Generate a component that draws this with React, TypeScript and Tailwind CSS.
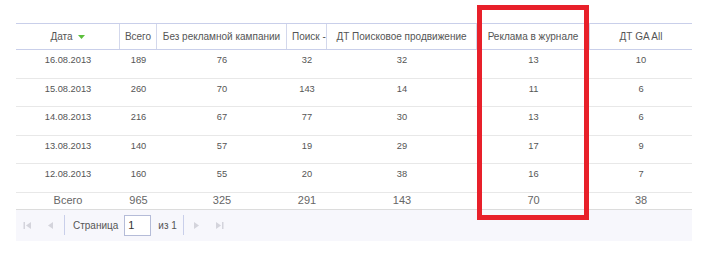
const cols = 'grid grid-cols-[104px_37px_130px_40px_150px_113px_102px]';

const rows = [
  ['16.08.2013', '189', '76', '32', '32', '13', '10'],
  ['15.08.2013', '260', '70', '143', '14', '11', '6'],
  ['14.08.2013', '216', '67', '77', '30', '13', '6'],
  ['13.08.2013', '140', '57', '19', '29', '17', '9'],
  ['12.08.2013', '160', '55', '20', '38', '16', '7'],
];

const totals = ['Всего', '965', '325', '291', '143', '70', '38'];

function FirstIcon() {
  return (
    <svg width="9" height="9" viewBox="0 0 9 9">
      <rect x="0.5" y="1" width="1.5" height="7" fill="#d4d4dc" />
      <path d="M8 1 L3 4.5 L8 8 Z" fill="#d4d4dc" />
    </svg>
  );
}

function PrevIcon() {
  return (
    <svg width="7" height="9" viewBox="0 0 7 9">
      <path d="M6 1 L1 4.5 L6 8 Z" fill="#d4d4dc" />
    </svg>
  );
}

function NextIcon() {
  return (
    <svg width="7" height="9" viewBox="0 0 7 9">
      <path d="M1 1 L6 4.5 L1 8 Z" fill="#d4d4dc" />
    </svg>
  );
}

function LastIcon() {
  return (
    <svg width="9" height="9" viewBox="0 0 9 9">
      <path d="M1 1 L6 4.5 L1 8 Z" fill="#d4d4dc" />
      <rect x="7" y="1" width="1.5" height="7" fill="#d4d4dc" />
    </svg>
  );
}

function HeaderCell({ children, last, left }: { children: React.ReactNode; last?: boolean; left?: boolean }) {
  return (
    <div
      className={`flex items-center overflow-hidden whitespace-nowrap px-[5px] ${
        left ? 'justify-start' : 'justify-center'
      } ${last ? '' : 'border-r border-[#d3d8ec]'}`}
    >
      {children}
    </div>
  );
}

export default function App() {
  return (
    <div className="relative w-[703px] h-[255px] bg-white pt-[23px] pl-[16px] font-['Liberation_Sans',Arial,sans-serif] text-[#666]">
      <div className="w-[676px]">
        {/* header */}
        <div className={`${cols} h-[27px] border-t border-b border-[#c9cfea] text-[10px] text-[#555]`}>
          <HeaderCell>
            Дата
            <svg className="ml-[5px]" width="7" height="4" viewBox="0 0 7 4">
              <path d="M0 0 L7 0 L3.5 4 Z" fill="#5cbf3c" />
            </svg>
          </HeaderCell>
          <HeaderCell>Всего</HeaderCell>
          <HeaderCell>Без рекламной кампании</HeaderCell>
          <HeaderCell left>Поиск -</HeaderCell>
          <HeaderCell>ДТ Поисковое продвижение</HeaderCell>
          <HeaderCell>Реклама в журнале</HeaderCell>
          <HeaderCell last>ДТ GA All</HeaderCell>
        </div>

        {/* data rows */}
        {rows.map((r) => (
          <div key={r[0]} className={`${cols} h-[28.6px] border-b-[1.5px] border-[#e8e8e8] text-[9.3px] leading-[11px] text-[#555]`}>
            {r.map((v, i) => (
              <div key={i} className="text-center pt-[5px]">
                {v}
              </div>
            ))}
          </div>
        ))}

        {/* totals */}
        <div className={`${cols} h-[17px] border-b border-[#dcdcdc] text-[11px] leading-[15px]`}>
          {totals.map((v, i) => (
            <div key={i} className="text-center">
              {v}
            </div>
          ))}
        </div>

        {/* pager */}
        <div className="flex items-center h-[31px] bg-[#f7f7fc] text-[10px] text-[#555]">
          <div className="ml-[7px] flex items-center">
            <FirstIcon />
          </div>
          <div className="ml-[15px] flex items-center">
            <PrevIcon />
          </div>
          <div className="ml-[10px] w-px h-[20px] bg-[#c9cfea]" />
          <span className="ml-[8px]">Страница</span>
          <div className="ml-[6px] w-[27px] h-[21px] border border-[#b5bcd8] bg-white text-[11px] text-[#333] pl-[3px] leading-[19px]">
            1
          </div>
          <span className="ml-[7px]">из 1</span>
          <div className="ml-[6px] w-px h-[20px] bg-[#c9cfea]" />
          <div className="ml-[9px] flex items-center">
            <NextIcon />
          </div>
          <div className="ml-[15px] flex items-center">
            <LastIcon />
          </div>
        </div>
      </div>

      {/* highlight overlay */}
      <div className="absolute left-[477px] top-[5px] w-[112px] h-[215px] border-[5px] border-[#e8202a]" />
    </div>
  );
}
